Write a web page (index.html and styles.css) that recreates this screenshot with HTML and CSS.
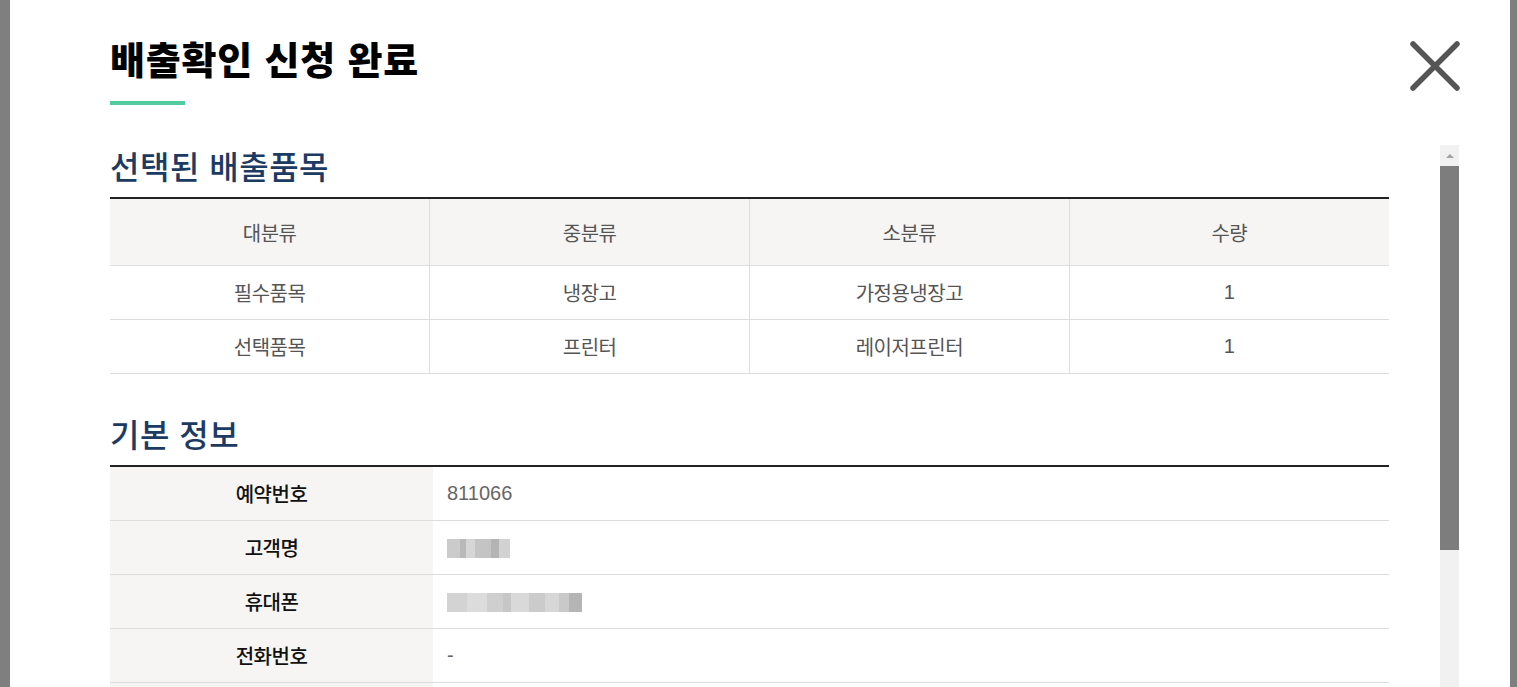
FILE: index.html
```html
<!DOCTYPE html>
<html lang="ko">
  <head>
    <meta charset="utf-8">
    <meta name="viewport" content="width=device-width">
    <title>배출확인 신청 완료</title>
    <link rel="stylesheet" href="styles.css">
  </head>

  <body>

    <div class="modal">
      <div class="modal-head">
        <h1 class="modal-title">배출확인 신청 완료</h1>
        <button class="btn-close" type="button" aria-label="닫기">
          <svg width="54" height="54" viewBox="0 0 54 54">
            <path d="M5 5 L49 49 M49 5 L5 49" stroke="#555" stroke-width="5.5" stroke-linecap="round" fill="none"/>
          </svg>
        </button>
      </div>

      <div class="modal-body">
        <div class="modal-content">

          <section class="sec">
            <h2 class="sec-title">선택된 배출품목</h2>
            <table class="tbl tbl-items">
              <thead>
                <tr>
                  <th>대분류</th>
                  <th>중분류</th>
                  <th>소분류</th>
                  <th>수량</th>
                </tr>
              </thead>
              <tbody>
                <tr>
                  <td>필수품목</td>
                  <td>냉장고</td>
                  <td>가정용냉장고</td>
                  <td class="num">1</td>
                </tr>
                <tr>
                  <td>선택품목</td>
                  <td>프린터</td>
                  <td>레이저프린터</td>
                  <td class="num">1</td>
                </tr>
              </tbody>
            </table>
          </section>

          <section class="sec">
            <h2 class="sec-title">기본 정보</h2>
            <table class="tbl tbl-info">
              <tbody>
                <tr>
                  <th>예약번호</th>
                  <td class="num">811066</td>
                </tr>
                <tr>
                  <th>고객명</th>
                  <td><span class="masked masked-name"></span></td>
                </tr>
                <tr>
                  <th>휴대폰</th>
                  <td><span class="masked masked-phone"></span></td>
                </tr>
                <tr>
                  <th>전화번호</th>
                  <td class="num">-</td>
                </tr>
                <tr>
                  <th></th>
                  <td></td>
                </tr>
              </tbody>
            </table>
          </section>

        </div>

        <div class="scrollbar">
          <span class="sb-btn"></span>
          <span class="sb-thumb"></span>
        </div>
      </div>
    </div>

  </body>
</html>
```

FILE: styles.css
```css
html, body {
  margin: 0;
  height: 100%;
}

body {
  background: #7f7f7f;
  overflow: hidden;
  font-family: "Liberation Sans", "Noto Sans CJK KR", sans-serif;
}

.modal {
  box-sizing: border-box;
  width: 1500px;
  height: 687px;
  margin-left: 10px;
  padding: 0 48px 0 100px;
  background: #fff;
  display: flex;
  flex-direction: column;
  overflow: hidden;
}

/* header */
.modal-head {
  display: flex;
  justify-content: space-between;
  align-items: flex-start;
  padding-top: 37px;
  height: 108px;
}

.modal-title {
  margin: 0;
  font-family: "Noto Sans CJK KR", sans-serif;
  font-size: 38px;
  line-height: 42px;
  font-weight: 900;
  letter-spacing: 0.8px;
  color: #000;
}

.modal-title::after {
  content: "";
  display: block;
  width: 75px;
  height: 4px;
  margin-top: 22px;
  background: #52cc9e;
}

.btn-close {
  margin: 2px 0 0;
  padding: 0;
  border: 0;
  background: none;
  width: 54px;
  height: 54px;
}

.btn-close svg {
  display: block;
}

/* body */
.modal-body {
  display: flex;
  flex: 1;
  min-height: 0;
}

.modal-content {
  width: 1279px;
}

.sec-title {
  margin: 0 0 12px;
  font-family: "Noto Sans CJK KR", sans-serif;
  font-size: 32px;
  line-height: 40px;
  font-weight: 500;
  letter-spacing: 0.5px;
  color: #1c3b63;
}

.sec + .sec {
  margin-top: 39px;
}

.tbl {
  width: 100%;
  border-collapse: collapse;
  border-top: 2px solid #222;
  table-layout: fixed;
  font-size: 20px;
  letter-spacing: -0.5px;
}

.tbl th,
.tbl td {
  padding: 0;
  border-bottom: 1px solid #ddd;
  font-family: "Liberation Sans", "Noto Sans CJK KR", sans-serif;
}

/* items table */
.tbl-items th,
.tbl-items td {
  text-align: center;
  color: #555;
  font-weight: 400;
}

.tbl-items th + th,
.tbl-items td + td {
  border-left: 1px solid #ddd;
}

.tbl-items th {
  height: 66px;
  background: #f6f5f3;
}

.tbl-items td {
  height: 53px;
}

.tbl .num {
  letter-spacing: 0;
}

/* info table */
.tbl-info th {
  width: 323px;
  height: 53px;
  background: #f6f5f3;
  color: #111;
  font-weight: 500;
  text-align: center;
}

.tbl-info td {
  padding-left: 14px;
  color: #666;
  text-align: left;
}

.masked {
  display: inline-block;
  height: 19px;
  vertical-align: middle;
}

.masked-name {
  width: 63px;
  background: linear-gradient(90deg,
    #cbcbcb 0 13px, #b9b9b9 13px 19px, #d6d6d6 19px 28px,
    #c4c4c4 28px 44px, #b4b4b4 44px 52px, #d2d2d2 52px 63px);
}

.masked-phone {
  width: 135px;
  background: linear-gradient(90deg,
    #d3d3d3 0 20px, #dcdcdc 20px 40px, #cfcfcf 40px 56px,
    #c6c6c6 56px 64px, #d9d9d9 64px 82px, #cbcbcb 82px 98px,
    #d7d7d7 98px 112px, #c9c9c9 112px 122px, #b5b5b5 122px 135px);
}

/* scrollbar */
.scrollbar {
  width: 19px;
  margin-left: 51px;
  display: flex;
  flex-direction: column;
  background: #f1f1f1;
}

.sb-btn {
  height: 21px;
  display: flex;
  align-items: center;
  justify-content: center;
}

.sb-btn::before {
  content: "";
  border-left: 4px solid transparent;
  border-right: 4px solid transparent;
  border-bottom: 4px solid #a3a3a3;
}

.sb-thumb {
  height: 384px;
  background: #7d7d7d;
}
```
